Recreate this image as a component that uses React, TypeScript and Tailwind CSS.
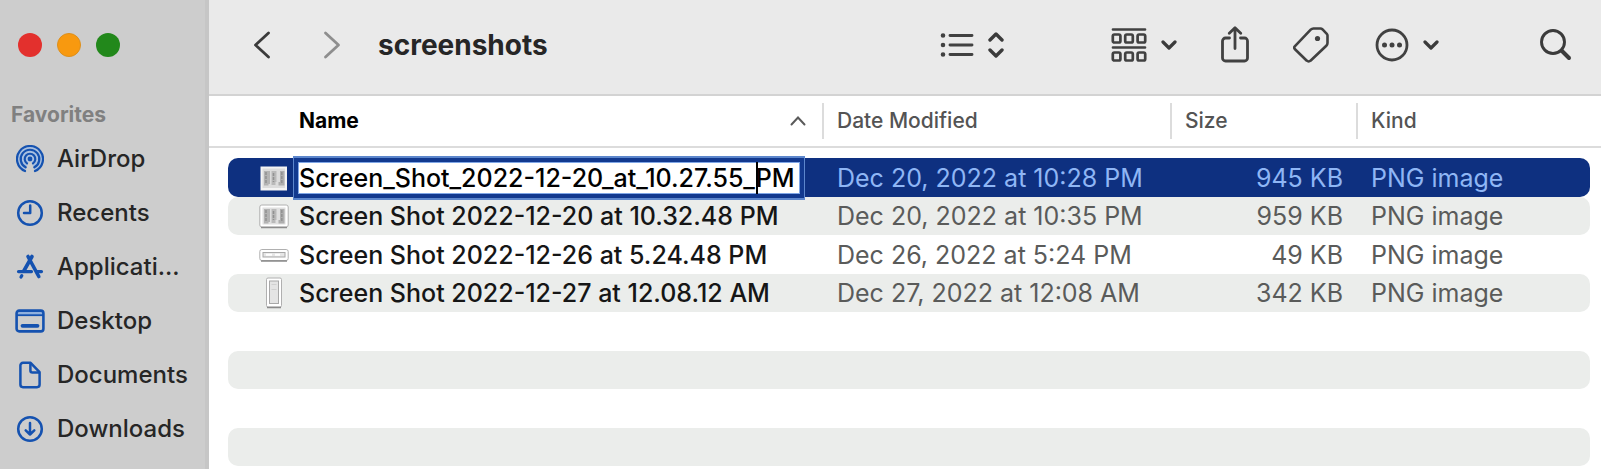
import type { ReactNode } from "react"

interface FileRow {
  name: string
  date: string
  size: string
  kind: string
  thumb: ReactNode
}

const BLUE = "#1552b0"

function AirDropIcon() {
  return (
    <svg width="28" height="28" viewBox="0 0 28 28" fill="none" stroke={BLUE} strokeLinecap="round">
      <path d="M9 26a13 13 0 1 1 10 0L14 14z" fill="#a9c0e0" stroke="none" />
      <circle cx="14" cy="14" r="2.4" fill={BLUE} stroke="none" />
      <path d="M11 18.4a5.3 5.3 0 1 1 6 0" strokeWidth="2.2" />
      <path d="M9.7 22.3a9.3 9.3 0 1 1 8.6 0" strokeWidth="2.2" />
      <path d="M9 26a13 13 0 1 1 10 0" strokeWidth="2.2" />
    </svg>
  )
}

function ClockIcon() {
  return (
    <svg width="28" height="28" viewBox="0 0 28 28" fill="none" stroke={BLUE} strokeWidth="2.5" strokeLinecap="round" strokeLinejoin="round">
      <circle cx="14" cy="14" r="11.8" />
      <path d="M14.2 6.5V14H8" />
    </svg>
  )
}

function AppsIcon() {
  return (
    <svg width="28" height="28" viewBox="0 0 28 28" fill="none" stroke={BLUE} strokeWidth="3.6" strokeLinecap="round">
      <path d="M12 3.5 22.8 23.5" />
      <path d="M16 3.5 7.8 18" />
      <path d="M2.5 18.6H15.5M21 18.6H25.5" strokeWidth="3.2" />
      <path d="M5.8 22.6 5 24" strokeWidth="3.2" />
    </svg>
  )
}

function DesktopIcon() {
  return (
    <svg width="30" height="28" viewBox="0 0 30 28" fill="none" stroke={BLUE} strokeWidth="2.6" strokeLinejoin="round">
      <path d="M2 4h26v4H2z" fill="#8fb0de" stroke="none" />
      <rect x="1.6" y="3.6" width="26.8" height="20.8" rx="2.6" />
      <path d="M2 8.2h26" strokeWidth="1.8" />
      <path d="M7.5 18.8h15" strokeWidth="3.8" strokeLinecap="round" />
    </svg>
  )
}

function DocumentIcon() {
  return (
    <svg width="28" height="28" viewBox="0 0 28 28" fill="none" stroke={BLUE} strokeWidth="2.5" strokeLinejoin="round">
      <path d="M7 1.8h7.6l9 9.4V23.6a2.6 2.6 0 0 1-2.6 2.6H7a2.6 2.6 0 0 1-2.6-2.6V4.4A2.6 2.6 0 0 1 7 1.8z" />
      <path d="M14.4 2v7.4a2 2 0 0 0 2 2h7" />
    </svg>
  )
}

function DownloadIcon() {
  return (
    <svg width="28" height="28" viewBox="0 0 28 28" fill="none" stroke={BLUE} strokeWidth="2.5" strokeLinecap="round" strokeLinejoin="round">
      <circle cx="14" cy="14" r="11.8" />
      <path d="M14 8v11.5M9.7 15.3l4.3 4.2 4.3-4.2" />
    </svg>
  )
}

const favorites = [
  { label: "AirDrop", icon: <AirDropIcon /> },
  { label: "Recents", icon: <ClockIcon /> },
  { label: "Applicati...", icon: <AppsIcon /> },
  { label: "Desktop", icon: <DesktopIcon /> },
  { label: "Documents", icon: <DocumentIcon /> },
  { label: "Downloads", icon: <DownloadIcon /> },
]

// Three columns of tiny text with ragged edges
function PageColumns() {
  return (
    <g>
      <path d="M5 6h6v13H9.5v1.5H5z" fill="#b3b3b3" />
      <path d="M12.5 6h5v11h-1v3h-4z" fill="#b9b9b9" />
      <path d="M21 6h4.5v14.5h-6V17H21z" fill="#aeaeae" />
      <path d="M7 7v12M14.5 8v9M22.8 7v12" stroke="#919191" strokeWidth="1.5" strokeDasharray="3 1" />
    </g>
  )
}

function SelectedThumb() {
  return (
    <svg width="30" height="26" viewBox="0 0 30 26" fill="none">
      <rect x="1.5" y="1.5" width="26.5" height="24" fill="#f4f4f4" />
      <rect x="3.5" y="3.5" width="22.5" height="19.5" fill="#dcdcdc" />
      <PageColumns />
    </svg>
  )
}

function PageThumb() {
  return (
    <svg width="30" height="26" viewBox="0 0 30 26" fill="none">
      <rect x="0.8" y="2" width="28.4" height="22" rx="2" fill="#fff" stroke="#b0b0b0" />
      <path d="M2 24.5h26" stroke="#8c8c8c" strokeWidth="1.5" />
      <rect x="3.5" y="4.5" width="23" height="17" fill="#e0e0e0" />
      <PageColumns />
    </svg>
  )
}

function WideThumb() {
  return (
    <svg width="30" height="26" viewBox="0 0 30 26" fill="none">
      <rect x="0.8" y="7.5" width="28.4" height="11" rx="2" fill="#fff" stroke="#b0b0b0" />
      <path d="M2 19h26" stroke="#8a8a8a" strokeWidth="1.5" />
      <rect x="4" y="10.5" width="22" height="4.5" fill="#e6e6e6" stroke="#a8a8a8" />
      <path d="M7 12.8h6M16 12.8h5" stroke="#fff" strokeWidth="2" />
    </svg>
  )
}

function TallThumb() {
  return (
    <svg width="30" height="32" viewBox="0 0 30 32" fill="none">
      <rect x="7.5" y="1" width="15" height="29" rx="1.5" fill="#fff" stroke="#b0b0b0" />
      <path d="M8 30.5h14" stroke="#8a8a8a" strokeWidth="1.5" />
      <rect x="10.5" y="4" width="9" height="22.5" fill="#e4e4e4" stroke="#a8a8a8" />
      <path d="M12.5 7.5h5M12.5 12.5h5" stroke="#d0d0d0" />
    </svg>
  )
}

const files: FileRow[] = [
  {
    name: "Screen_Shot_2022-12-20_at_10.27.55_PM",
    date: "Dec 20, 2022 at 10:28 PM",
    size: "945 KB",
    kind: "PNG image",
    thumb: <SelectedThumb />,
  },
  {
    name: "Screen Shot 2022-12-20 at 10.32.48 PM",
    date: "Dec 20, 2022 at 10:35 PM",
    size: "959 KB",
    kind: "PNG image",
    thumb: <PageThumb />,
  },
  {
    name: "Screen Shot 2022-12-26 at 5.24.48 PM",
    date: "Dec 26, 2022 at 5:24 PM",
    size: "49 KB",
    kind: "PNG image",
    thumb: <WideThumb />,
  },
  {
    name: "Screen Shot 2022-12-27 at 12.08.12 AM",
    date: "Dec 27, 2022 at 12:08 AM",
    size: "342 KB",
    kind: "PNG image",
    thumb: <TallThumb />,
  },
]

const COLS = "grid grid-cols-[minmax(0,1fr)_348px_186px_234px] items-center"

function ChevronDown() {
  return (
    <svg width="16" height="10" viewBox="0 0 16 10" fill="none" stroke="#3b3b3b" strokeWidth="3.2" strokeLinecap="round" strokeLinejoin="round">
      <path d="M2 2l6 6 6-6" />
    </svg>
  )
}

function Sidebar() {
  return (
    <aside className="w-[209px] shrink-0 border-r-4 border-[#c6c6c6] bg-[#cdcdcd]">
      <div className="flex gap-[15px] pl-[18px] pt-[33px]">
        <button aria-label="Close" className="size-6 rounded-full bg-[#e3302d]" />
        <button aria-label="Minimize" className="size-6 rounded-full border border-[#dd8f1c] bg-[#f8990f]" />
        <button aria-label="Zoom" className="size-6 rounded-full bg-[#22881b]" />
      </div>
      <h2 className="mt-11 pl-[11px] text-[21px] font-bold leading-7 text-[#808080]">Favorites</h2>
      <nav className="mt-[3px]">
        {favorites.map((item) => (
          <a key={item.label} href="#" className="flex h-[54px] items-center gap-3 pl-[15px] text-[24px] font-medium text-[#262626]">
            <span className="flex w-[30px] shrink-0 justify-center">{item.icon}</span>
            {item.label}
          </a>
        ))}
      </nav>
    </aside>
  )
}

function Toolbar() {
  return (
    <header className="flex h-24 items-center border-b-2 border-[#d3d3d3] bg-[#eaeaea] pb-1 pl-11 pr-7">
      <button aria-label="Back">
        <svg width="18" height="28" viewBox="0 0 18 28" fill="none" stroke="#3b3b3b" strokeWidth="2.8" strokeLinecap="round" strokeLinejoin="round">
          <path d="M15.5 2 2.5 14l13 12" />
        </svg>
      </button>
      <button aria-label="Forward" className="ml-[52px]">
        <svg width="18" height="28" viewBox="0 0 18 28" fill="none" stroke="#8e8e8e" strokeWidth="2.8" strokeLinecap="round" strokeLinejoin="round">
          <path d="M2.5 2l13 12-13 12" />
        </svg>
      </button>
      <h1 className="ml-[37px] text-[28px] font-bold leading-9 text-[#262626]">screenshots</h1>

      <button aria-label="View as list" className="ml-auto flex items-center gap-[14px]">
        <svg width="34" height="26" viewBox="0 0 34 26" fill="none" stroke="#414141" strokeWidth="2.9" strokeLinecap="round">
          <path d="M10 3.5h22M10 13h22M10 22.5h22" />
          <path d="M3 3.5h.01M3 13h.01M3 22.5h.01" strokeWidth="4.6" />
        </svg>
        <svg width="16" height="28" viewBox="0 0 16 28" fill="none" stroke="#3b3b3b" strokeWidth="3.4" strokeLinecap="round" strokeLinejoin="round">
          <path d="M2 9l6-6 6 6M2 19l6 6 6-6" />
        </svg>
      </button>

      <button aria-label="Group items" className="ml-[107px] flex items-center gap-[14px]">
        <svg width="36" height="36" viewBox="0 0 36 36" fill="none" stroke="#414141" strokeWidth="2.7" strokeLinecap="round">
          <path d="M2 2.5h32M2 20.5h32" />
          <rect x="1.8" y="7.5" width="7.6" height="8" rx="1.6" />
          <rect x="14.2" y="7.5" width="7.6" height="8" rx="1.6" />
          <rect x="26.6" y="7.5" width="7.6" height="8" rx="1.6" />
          <rect x="1.8" y="25.5" width="7.6" height="8" rx="1.6" />
          <rect x="14.2" y="25.5" width="7.6" height="8" rx="1.6" />
          <rect x="26.6" y="25.5" width="7.6" height="8" rx="1.6" />
        </svg>
        <ChevronDown />
      </button>

      <button aria-label="Share" className="ml-11">
        <svg width="28" height="38" viewBox="0 0 28 38" fill="none" stroke="#414141" strokeWidth="2.8" strokeLinecap="round" strokeLinejoin="round">
          <path d="M8.5 12h-4a3 3 0 0 0-3 3v17a3 3 0 0 0 3 3h19a3 3 0 0 0 3-3V15a3 3 0 0 0-3-3h-4" />
          <path d="M14 22.5V2M8.3 7.3 14 1.7l5.7 5.6" />
        </svg>
      </button>

      <button aria-label="Edit tags" className="ml-11">
        <svg width="36" height="36" viewBox="0 0 36 36" fill="none" stroke="#414141" strokeWidth="2.6" strokeLinejoin="round">
          <path d="M20.5 1.5h7a2.5 2.5 0 0 1 1.8.7l4.5 4.6a2.5 2.5 0 0 1 .7 1.7V16a4 4 0 0 1-1.2 2.8L17.5 33.7a2.6 2.6 0 0 1-3.7 0L2 22.3a2.3 2.3 0 0 1 0-3.2L17.7 2.7a4 4 0 0 1 2.800-1.200z" />
          <circle cx="24.5" cy="11.5" r="2.6" fill="#414141" stroke="none" />
        </svg>
      </button>

      <button aria-label="More actions" className="ml-[46px] flex items-center gap-[14px]">
        <svg width="34" height="34" viewBox="0 0 34 34" fill="none" stroke="#414141" strokeWidth="2.8">
          <circle cx="17" cy="17" r="15" />
          <g fill="#414141" stroke="none">
            <circle cx="9.5" cy="17" r="2.5" />
            <circle cx="17" cy="17" r="2.5" />
            <circle cx="24.5" cy="17" r="2.5" />
          </g>
        </svg>
        <ChevronDown />
      </button>

      <button aria-label="Search" className="ml-[100px]">
        <svg width="34" height="34" viewBox="0 0 34 34" fill="none" stroke="#3b3b3b" strokeLinecap="round">
          <circle cx="14" cy="14" r="11.5" strokeWidth="2.9" />
          <path d="M23 23l7 7" strokeWidth="4" />
        </svg>
      </button>
    </header>
  )
}

function RenameField({ value }: { value: string }) {
  return (
    <div className="relative -ml-px">
      <input
        aria-label="File name"
        defaultValue={value}
        spellCheck={false}
        className="block h-8 w-[502px] border border-[#7fa6e6] bg-white text-black caret-transparent shadow-[0_0_0_4px_#12398f,0_1px_0_5px_#5c86cc,0_-1px_0_5px_#5c86cc] outline-none"
      />
      {/* insertion point, just before the suffix */}
      <span className="absolute right-[42px] top-0 h-8 w-[2px] bg-black" />
    </div>
  )
}

export default function App() {
  return (
    <div className="flex min-h-screen bg-white font-['Inter','Liberation_Sans',sans-serif]">
      <Sidebar />
      <main className="min-w-0 flex-1">
        <Toolbar />
        <table className="block">
          <thead className="block border-b-2 border-[#dcdcdc] pl-[19px] pr-[11px] text-[21px] leading-7 text-[#545454]">
            <tr className={`${COLS} h-[50px]`}>
              <th className="flex items-center justify-between pl-[71px] pr-4 text-left font-bold text-black">
                Name
                <svg width="16" height="10" viewBox="0 0 16 10" fill="none" stroke="#5a5a5a" strokeWidth="2" strokeLinecap="round">
                  <path d="M1.5 8.5 8 1.5l6.5 7" />
                </svg>
              </th>
              <th className="flex h-9 items-center border-l-2 border-[#dcdcdc] pl-[13px] font-medium">Date Modified</th>
              <th className="flex h-9 items-center border-l-2 border-[#dcdcdc] pl-[13px] font-medium">Size</th>
              <th className="flex h-9 items-center border-l-2 border-[#dcdcdc] pl-[13px] font-medium">Kind</th>
            </tr>
          </thead>
          <tbody className="block pl-[19px] pr-[11px] pt-[10px] text-[25px] leading-8">
            {files.map((file, i) => (
              <tr
                key={file.name}
                className={`${COLS} rounded-[10px] ${
                  i === 0
                    ? "relative h-[39px] bg-[#0e3080] text-[#8fb6f5]"
                    : i % 2
                      ? "h-[38px] bg-[#ebedeb] text-[#5a5b5a]"
                      : "h-[39px] text-[#5a5b5a]"
                }`}
              >
                <td className="flex items-center gap-[10px] whitespace-nowrap pl-[31px] font-medium text-[#161616]">
                  {file.thumb}
                  {i === 0 ? <RenameField value={file.name} /> : <span>{file.name}</span>}
                </td>
                <td className="pl-[15px]">{file.date}</td>
                <td className="pr-[13px] text-right">{file.size}</td>
                <td className="pl-[15px]">{file.kind}</td>
              </tr>
            ))}
            {/* the stripes carry on below the last file */}
            {[4, 5, 6, 7].map((i) => (
              <tr key={i} className={i % 2 ? "block h-[38px] rounded-[10px] bg-[#ebedeb]" : "block h-[39px]"} />
            ))}
          </tbody>
        </table>
      </main>
    </div>
  )
}
